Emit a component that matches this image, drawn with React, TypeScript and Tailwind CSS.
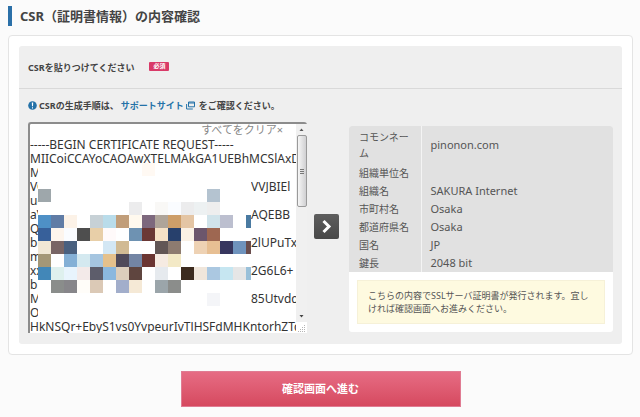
import React from "react";

const csrText = [
  "-----BEGIN CERTIFICATE REQUEST-----",
  "MIICojCCAYoCAQAwXTELMAkGA1UEBhMCSlAxDjA",
  "M",
  "VQ\tVVJBIEl",
  "uc",
  "aV\tAQEBB",
  "Q",
  "bl\t2lUPuTx",
  "m",
  "xx\t2G6L6+",
  "bi",
  "M\t85Utvdq",
  "O",
  "HkNSQr+EbyS1vs0YvpeurIvTlHSFdMHKntorhZTq",
].join("\n");

const W = "#ffffff";
const COLUMNS = 17;
const mosaic: string[][] = [
  [W, W, W, W, W, W, W, W, "#fff9f3"],
  [],
  ["#9ea7ab", W, W, W, W, W, W, W, W, W, W, W, W, "#b4c3d0"],
  [W, W, W, W, W, W, W, "#ececed", W, "#f9f8f6", "#fafcff", "#ececed", "#edf1f2", "#eeeeee"],
  ["#4e90c6", "#607ca5", "#fcf2e7", W, "#c7d1d6", "#b9dcea", "#c19e7a", "#fff9ee", "#7d687d", "#afa499", "#cd9e69", "#e4c5a4", W, "#d0e3ea", "#bcbfcf", W, "#4a7aa1"],
  ["#37609a", "#fdf5ed", "#fafcff", "#4e4e4e", "#e8cfa8", "#fffafa", W, "#6e92b2", "#6b3835", "#f6e1c6", "#27406c", "#faf1e5", "#6c566c", "#9e6751"],
  ["#f0e7d5", "#786565", "#49607f", W, W, "#d3e7f4", "#d1ba93", W, W, "#625655", "#8d7b70", W, "#eed2b4", "#e7bf93", "#37365f", "#6f93bd", "#6a4d4d"],
  ["#a49777", W, "#84b0d6", "#d4e9f0", "#a5c5e0", "#e5c18c", "#504a5a", "#7385a4", "#6b3532", "#f6ebe2", "#f3e9c6"],
  ["#4287b8", "#def0ee", "#e8f4fd", "#f3eae9", "#5d5d6b", "#8bb8de", "#dccebc", "#5f453f", W, "#e6eaee", W, "#3c2b1f", "#f0e6db", "#abc8e1", "#c6e6f1", "#e6e6e6", "#99c0d9"],
  [W, "#8a8d8b", "#87868a", "#fffdf9", "#dbc9b6", W, "#a2aecb", "#f5e9d6", W, "#9ba5aa", "#8b8d8b"],
  [W, W, W, W, W, W, W, W, W, W, W, W, W, "#f4f5f8"],
  [],
];

const subject: [string, string][] = [
  ["コモンネーム", "pinonon.com"],
  ["組織単位名", ""],
  ["組織名", "SAKURA Internet"],
  ["市町村名", "Osaka"],
  ["都道府県名", "Osaka"],
  ["国名", "JP"],
  ["鍵長", "2048 bit"],
];

function Mosaic() {
  return (
    <div
      aria-hidden="true"
      className="absolute top-[39px] left-2 grid h-[159px] w-[213px] auto-rows-[13px] grid-cols-[repeat(17,13px)] overflow-hidden bg-white"
    >
      {mosaic.flatMap((row, r) =>
        Array.from({ length: COLUMNS }, (_, c) => (
          <span key={`${r}-${c}`} style={{ backgroundColor: row[c] ?? W }} />
        )),
      )}
    </div>
  );
}

function ScrollBar() {
  return (
    <div aria-hidden="true" className="flex w-[11px] shrink-0 flex-col items-center bg-[#f0f0f0]">
      <svg className="h-[11px] w-[11px] shrink-0" viewBox="0 0 11 11">
        <path d="M3.5 7 5.5 4.5 7.5 7Z" fill="#555" />
      </svg>
      <div className="flex h-[72px] w-[10px] shrink-0 flex-col items-center justify-center gap-px rounded-[2px] border border-[#9a9a9a] bg-linear-to-r from-[#f6f6f6] to-[#d0d0d2]">
        <i className="h-px w-1 bg-[#777]" />
        <i className="h-px w-1 bg-[#777]" />
        <i className="h-px w-1 bg-[#777]" />
      </div>
      <div className="flex-1" />
      <svg className="h-[11px] w-[11px] shrink-0" viewBox="0 0 11 11">
        <path d="M3.5 4 5.5 6.5 7.5 4Z" fill="#444" />
      </svg>
      <svg className="h-[11px] w-[11px] shrink-0 bg-white" viewBox="0 0 11 11">
        <path d="M8 3h1v1H8zM8 5h1v1H8zM8 7h1v1H8zM8 9h1v1H8zM6 5h1v1H6zM6 7h1v1H6zM6 9h1v1H6zM4 7h1v1H4zM4 9h1v1H4zM2 9h1v1H2z" fill="#b5b5b5" />
      </svg>
    </div>
  );
}

export default function App() {
  return (
    <main className="min-h-screen bg-[#fbfbfb] pt-[6px] pr-[7px] pl-2 font-['Noto_Sans','Noto_Sans_CJK_JP',sans-serif] text-[#444]">
      <h1 className="flex h-5 items-center border-l-4 border-[#2b70a8] pl-2 text-[13px] leading-5 font-bold">
        CSR（証明書情報）の内容確認
      </h1>

      <form onSubmit={(e) => e.preventDefault()}>
        <section className="mt-[9px] rounded-[4px] border border-[#e4e4e4] bg-white p-[10px]">
          <div className="rounded-[3px] bg-[#efefef]">
            <div className="flex h-[43px] items-center gap-[15px] border-b border-[#d9d9d9] pt-[2px] pl-[9px]">
              <label htmlFor="csr" className="text-[9px] leading-3 font-bold">
                CSRを貼りつけてください
              </label>
              <span className="mb-1 flex h-[9px] w-5 items-center justify-center rounded-[1px] bg-[#d93a68] text-[6px] leading-none font-bold text-white">
                必須
              </span>
            </div>

            <p className="flex h-[33px] items-center pl-[9px] text-[9px] leading-3 font-bold whitespace-nowrap">
              <svg className="mr-[2px] h-[9px] w-[9px]" viewBox="0 0 9 9" aria-hidden="true">
                <circle cx="4.5" cy="4.5" r="4.3" fill="#2472a8" />
                <path d="M3.8 1.4h1.4L5 5.3H4zM4 6.2h1v1.2H4z" fill="#fff" />
              </svg>
              CSRの生成手順は、
              <a href="#support" className="mx-[2px] flex items-center text-[#2472a8]">
                サポートサイト
                <svg className="mx-[2px] h-[9px] w-[9px]" viewBox="0 0 9 9" fill="none" stroke="#2472a8" aria-hidden="true">
                  <path d="M2.5 1h6v4.8h-6zM2.5 2h6M.6 3v5h6.2" />
                </svg>
              </a>
              をご確認ください。
            </p>

            <div className="flex items-start pr-[9px] pb-[11px] pl-[9px]">
              <div className="relative flex h-[211px] w-[279px] shrink-0 rounded-t-[3px] border-t-2 border-l-2 border-t-[#8c8c8c] border-l-[#8c8c8c] bg-white">
                <textarea
                  id="csr"
                  defaultValue={csrText}
                  wrap="off"
                  spellCheck={false}
                  className="block min-w-0 flex-1 resize-none overflow-hidden bg-transparent pt-[14px] text-[12px] leading-[14px] whitespace-pre text-[#333] outline-none [tab-size:221px]"
                />
                <Mosaic />
                <button type="button" className="absolute top-0 right-6 text-[11px] leading-3 text-[#888]">
                  すべてをクリア×
                </button>
                <ScrollBar />
              </div>

              <button
                type="button"
                aria-label="CSRを読み込む"
                className="mt-[92px] ml-[7px] flex h-[25px] w-[25px] shrink-0 items-center justify-center rounded-[2px] bg-linear-to-b from-[#5e5e5e] to-[#484848]"
              >
                <svg className="h-[15px] w-[15px]" viewBox="0 0 15 15" fill="none" stroke="#fff" strokeWidth="3" aria-hidden="true">
                  <path d="M4.5 2 10 7.5 4.5 13" />
                </svg>
              </button>

              <div className="mt-1 ml-[10px] min-w-0 flex-1 overflow-hidden rounded-[3px] bg-white">
                <table className="w-full table-fixed border-collapse bg-[#e1e1e1] text-[#555]">
                  <tbody>
                    {subject.map(([name, value], i) => (
                      <tr key={name} className={i === 0 ? "h-[38px]" : "h-[18px]"}>
                        <th scope="row" className="w-[72px] border-r border-[#f4f4f4] py-0 pr-1 pl-[10px] text-left text-[10px] leading-4 font-normal">
                          {name}
                        </th>
                        <td className="p-0 pl-[9px] text-[11px] leading-4">{value}</td>
                      </tr>
                    ))}
                  </tbody>
                </table>
                <p className="m-2 border border-[#f6f1d8] bg-[#fefae0] px-[10px] pt-[8px] pb-[8px] text-[9px] leading-[13px] text-[#555]">
                  こちらの内容でSSLサーバ証明書が発行されます。宜しければ確認画面へお進みください。
                </p>
              </div>
            </div>
          </div>
        </section>

        <button
          type="submit"
          className="mx-auto mt-4 block h-9 w-[280px] border border-[#e07c93] bg-linear-to-b from-[#e66c84] to-[#d6495f] text-[11px] leading-4 font-bold text-white"
        >
          確認画面へ進む
        </button>
      </form>
    </main>
  );
}
